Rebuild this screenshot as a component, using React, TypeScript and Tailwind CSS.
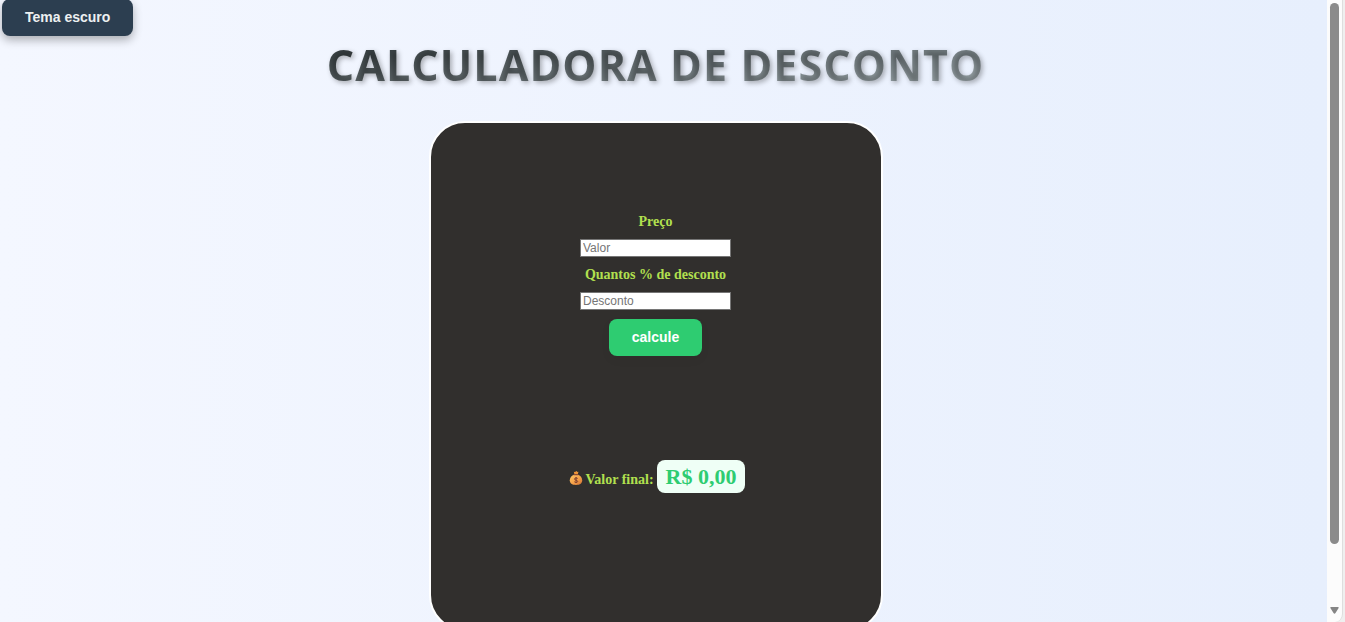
import { useState } from "react";

const buttonBase =
  "cursor-pointer rounded-lg px-[23px] py-2 font-['Liberation_Sans',Arial,sans-serif] text-[14px] leading-[21px] font-bold";
const labelBase = "text-[14px] leading-4 font-bold text-[#b1e04f]";
const inputBase =
  "h-[18px] w-[151px] border border-[#767676] bg-white px-[2px] font-['Liberation_Sans',Arial,sans-serif] text-[12px] leading-[14px] text-black placeholder:text-[#757575] placeholder:opacity-100";

function MoneyBag() {
  return (
    <svg viewBox="0 0 14 16" className="h-4 w-3.5 shrink-0 translate-y-[2px]" aria-hidden="true">
      <defs>
        <linearGradient id="bag" x1="0" y1="0" x2="1" y2="1">
          <stop offset="0" stopColor="#ffc766" />
          <stop offset="0.55" stopColor="#f5a048" />
          <stop offset="1" stopColor="#cf6f33" />
        </linearGradient>
      </defs>
      <path d="M4.8 1.7 6 2.1 7.5 1l1 1 1-.2L8.700 4.500H5.500Z" fill="#ef9437" />
      <path d="M5.200 4.800C2.600 5.600.800 7.800.800 10.300c0 3 2 4.700 6.200 4.700s6.200-1.700 6.200-4.700c0-2.500-1.800-4.700-4.400-5.500Z" fill="url(#bag)" />
      <rect x="4.500" y="3.900" width="5" height="1.300" rx="0.600" fill="#8c4a35" />
      <path d="M8.700 8.500C8.300 7.800 5.500 7.600 5.500 9c0 1.600 3.200.9 3.200 2.400 0 1.400-2.800 1.300-3.400.3M7.100 7v6" fill="none" stroke="#7d3f31" strokeWidth="1" />
    </svg>
  );
}

function ScrollRail() {
  return (
    <div className="flex w-[18px] shrink-0 bg-[#efefef]" aria-hidden="true">
      <div className="flex w-4 flex-col items-center justify-between rounded-br-lg border-r border-[#dedede] bg-[#fcfcfc] pt-[3px] pb-2">
        <div className="h-[87vh] w-[9px] rounded-full bg-[#8b8b8b]" />
        <svg viewBox="0 0 9 7" className="h-[7px] w-[9px]">
          <path d="M1 0h7q1 0 .6 1L5.500 6q-1 1.400-2 0L.4 1Q0 0 1 0Z" fill="#858585" />
        </svg>
      </div>
    </div>
  );
}

export default function App() {
  const [price, setPrice] = useState("");
  const [discount, setDiscount] = useState("");
  const [total, setTotal] = useState(0);
  const [dark, setDark] = useState(false);

  const calculate = () => {
    const value = Number(price) * (1 - Number(discount) / 100);
    setTotal(Number.isFinite(value) ? value : 0);
  };

  return (
    <div className="flex h-screen font-['Liberation_Serif','Times_New_Roman',serif]">
      <div
        className={`min-w-0 flex-1 overflow-hidden ${
          dark ? "bg-[#1e272e]" : "bg-linear-to-r from-[#f4f7ff] to-[#e7effd]"
        }`}
      >
        <header className="-mt-px flex pl-[2px]">
          <button
            type="button"
            onClick={() => setDark(!dark)}
            className={`${buttonBase} bg-[#2c3e50] text-[#ecf0f1] shadow-[0_4px_10px_rgba(0,0,0,0.3)]`}
          >
            {dark ? "Tema claro" : "Tema escuro"}
          </button>
        </header>
        <main className="flex flex-col items-center pr-4">
          <h1 className="bg-linear-to-br from-[#272e30] to-[#b2bec3] bg-clip-text text-center font-['Open_Sans','Noto_Sans',sans-serif] text-[43px] leading-[58px] font-bold tracking-wide text-transparent text-shadow-[2px_2px_5px_rgba(0,0,0,0.3)]">
            CALCULADORA DE DESCONTO
          </h1>
          <form
            onSubmit={(event) => {
              event.preventDefault();
              calculate();
            }}
            className="mt-[27px] flex w-full max-w-[454px] shrink-0 flex-col items-center rounded-[36px] border-2 border-white bg-[#312f2d] pt-[91px] pb-[136px]"
          >
            <label htmlFor="price" className={labelBase}>
              Preço
            </label>
            <input
              id="price"
              value={price}
              onChange={(event) => setPrice(event.target.value)}
              placeholder="Valor"
              className={`${inputBase} mt-[9px]`}
            />
            <label htmlFor="discount" className={`${labelBase} mt-[10px]`}>
              Quantos % de desconto
            </label>
            <input
              id="discount"
              value={discount}
              onChange={(event) => setDiscount(event.target.value)}
              placeholder="Desconto"
              className={`${inputBase} mt-[9px]`}
            />
            <button type="submit" className={`${buttonBase} mt-[9px] bg-[#2ecc71] text-white shadow-[0_4px_10px_rgba(0,0,0,0.05)]`}>
              calcule
            </button>
            <p className="mt-[104px] flex items-baseline gap-[3px] pl-[3px]">
              <MoneyBag />
              <span className={labelBase}>Valor final:</span>
              <output
                htmlFor="price discount"
                className="rounded-lg bg-[#effff6] px-[9px] py-1 text-[22px] leading-[25px] font-bold text-[#2ecc71]"
              >
                R$ {total.toFixed(2).replace(".", ",")}
              </output>
            </p>
          </form>
        </main>
      </div>
      <ScrollRail />
    </div>
  );
}
